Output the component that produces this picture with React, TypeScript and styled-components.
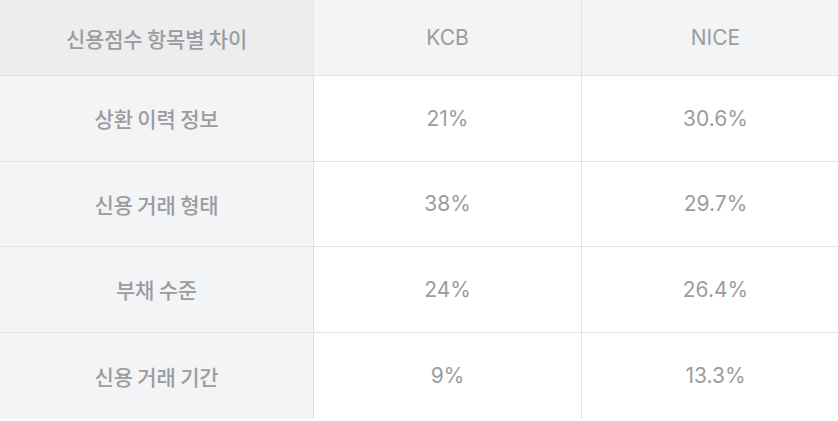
import React from "react";
import styled, { createGlobalStyle } from "styled-components";

const Global = createGlobalStyle`
  html, body { margin: 0; padding: 0; background: #ffffff; }
  body { overflow: hidden; }
`;

const Table = styled.div`
  display: grid;
  grid-template-columns: 314px 268px 268px;
  width: 850px;
  font-family: Inter, "Noto Sans CJK KR", sans-serif;
`;

const Cell = styled.div<{ $variant: "corner" | "head" | "label" | "value"; $last?: boolean }>`
  display: flex;
  align-items: center;
  justify-content: center;
  height: ${(p) => (p.$variant === "corner" || p.$variant === "head" ? "75px" : p.$last ? "86px" : "84.6px")};
  box-sizing: content-box;
  background: ${(p) =>
    p.$variant === "corner" ? "#ededef" : p.$variant === "head" || p.$variant === "label" ? "#f3f4f6" : "#ffffff"};
  border-right: 1px solid #e2e2e4;
  border-bottom: ${(p) => (p.$last ? "none" : "1px solid #e2e2e4")};
  color: #9c9c9e;
  font-family: ${(p) =>
    p.$variant === "corner" || p.$variant === "label"
      ? `"Noto Sans CJK KR", sans-serif`
      : `Inter, "Noto Sans CJK KR", sans-serif`};
  font-weight: ${(p) => (p.$variant === "corner" || p.$variant === "label" ? 500 : 400)};
  font-size: 21px;
  letter-spacing: ${(p) => (p.$variant === "corner" || p.$variant === "label" ? "-0.2px" : "0")};
`;

const rows = [
  ["상환 이력 정보", "21%", "30.6%"],
  ["신용 거래 형태", "38%", "29.7%"],
  ["부채 수준", "24%", "26.4%"],
  ["신용 거래 기간", "9%", "13.3%"],
];

export default function App() {
  return (
    <>
      <Global />
      <Table>
        <Cell $variant="corner">신용점수 항목별 차이</Cell>
        <Cell $variant="head">KCB</Cell>
        <Cell $variant="head">NICE</Cell>
        {rows.map((r, i) => (
          <React.Fragment key={r[0]}>
            <Cell $variant="label" $last={i === rows.length - 1}>{r[0]}</Cell>
            <Cell $variant="value" $last={i === rows.length - 1}>{r[1]}</Cell>
            <Cell $variant="value" $last={i === rows.length - 1}>{r[2]}</Cell>
          </React.Fragment>
        ))}
      </Table>
    </>
  );
}
